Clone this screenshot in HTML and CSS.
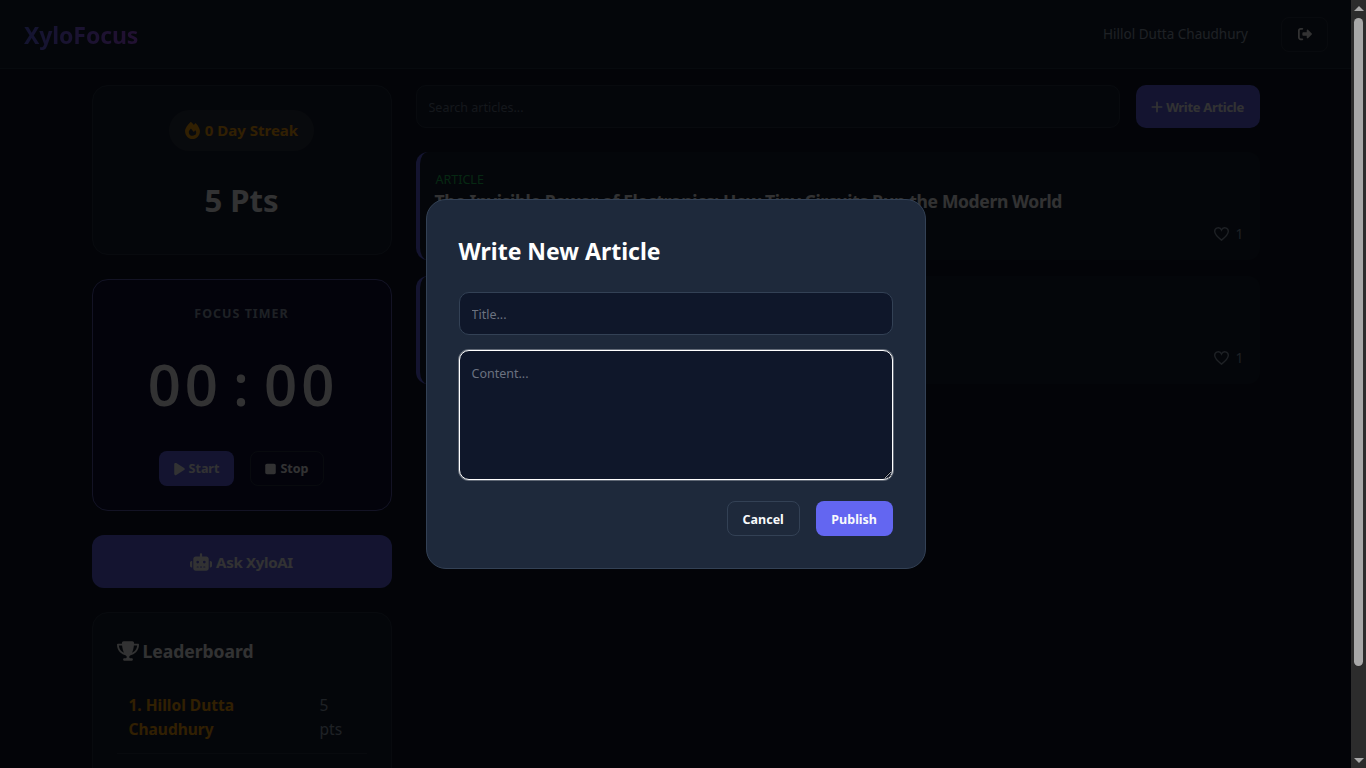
FILE: index.html
```html
<!DOCTYPE html>
<html lang="en">
<head>
    <meta charset="UTF-8">
    <meta name="viewport" content="width=device-width, initial-scale=1.0">
    <title>XyloFocus</title>
    <link rel="stylesheet" href="styles.css">
</head>
<body>
    <header class="navbar">
        <div class="logo">XyloFocus</div>
        <div class="user-box">
            <span class="user-name">Hillol Dutta Chaudhury</span>
            <button class="logout-btn" aria-label="Log out">
                <svg width="14" height="14" viewBox="0 0 512 512"><path fill="currentColor" d="M502.6 278.6c12.5-12.5 12.5-32.8 0-45.3l-128-128c-9.2-9.2-22.9-11.9-34.9-6.9S320 115.1 320 128v64H192c-17.7 0-32 14.3-32 32v64c0 17.7 14.3 32 32 32h128v64c0 12.9 7.8 24.6 19.8 29.6s25.7 2.2 34.9-6.9l128-128zM160 96c17.7 0 32-14.3 32-32s-14.3-32-32-32H96C43 32 0 75 0 128v256c0 53 43 96 96 96h64c17.7 0 32-14.3 32-32s-14.3-32-32-32H96c-17.7 0-32-14.3-32-32V128c0-17.7 14.3-32 32-32h64z"/></svg>
            </button>
        </div>
    </header>

    <div class="container">
        <aside class="sidebar">
            <section class="card stats-card">
                <div class="streak">
                    <svg width="15" height="17" viewBox="0 0 448 512"><path fill="currentColor" d="M159.3 5.4c7.8-7.3 19.9-7.2 27.7.1 27.6 25.9 53.5 53.8 77.7 84 11-14.4 23.5-30.1 37-42.9 7.9-7.4 20.1-7.4 28 .1 34.6 33 63.9 76.6 84.5 118 20.3 40.8 33.8 82.5 33.8 111.9C448 404.2 348.2 512 224 512 98.4 512 0 404.1 0 276.5c0-38.4 17.8-85.3 45.4-131.7C73.3 97.7 112.7 48.6 159.3 5.4zM225.7 416c25.3 0 47.7-7 68.8-21 42.1-29.4 53.4-88.2 28.1-134.4-4.5-9-16-9.6-22.5-2l-25.2 29.3c-6.6 7.6-18.5 7.4-24.7-.5-16.5-21-46-58.5-62.8-79.8-6.3-8-18.3-8.1-24.7-.1-33.8 42.5-50.8 69.3-50.8 99.4C112 375.4 162.6 416 225.7 416z"/></svg>
                    <span class="streak-text">0 Day Streak</span>
                </div>
                <div class="points">5 Pts</div>
            </section>

            <section class="card timer-card">
                <div class="timer-label">FOCUS TIMER</div>
                <div class="timer-digits">00 : 00</div>
                <div class="timer-actions">
                    <button class="btn btn-primary">
                        <svg width="11" height="14" viewBox="0 0 384 512"><path fill="currentColor" d="M73 39c-15-9-33-9-48.500-1S0 63 0 80v352c0 17 9 33 24.500 42s34 8 48.500-1l288-176c14-9 23-24 23-41s-9-32-23-41L73 39z"/></svg>
                        Start
                    </button>
                    <button class="btn btn-ghost">
                        <svg width="11" height="14" viewBox="0 0 384 512"><path fill="currentColor" d="M0 128c0-35 29-64 64-64h256c35 0 64 29 64 64v256c0 35-29 64-64 64H64c-35 0-64-29-64-64V128z"/></svg>
                        Stop
                    </button>
                </div>
            </section>

            <button class="ask-btn">
                <svg width="22" height="18" viewBox="0 0 640 512"><path fill="currentColor" d="M320 0c17.700 0 32 14.300 32 32v64h120c39.800 0 72 32.200 72 72v272c0 39.800-32.200 72-72 72H168c-39.800 0-72-32.200-72-72V168c0-39.800 32.200-72 72-72h120V32c0-17.700 14.300-32 32-32zM208 384c-8.800 0-16 7.200-16 16s7.200 16 16 16h32c8.800 0 16-7.200 16-16s-7.200-16-16-16h-32zm96 0c-8.800 0-16 7.200-16 16s7.200 16 16 16h32c8.800 0 16-7.200 16-16s-7.200-16-16-16h-32zm96 0c-8.800 0-16 7.200-16 16s7.200 16 16 16h32c8.800 0 16-7.200 16-16s-7.200-16-16-16h-32zM264 256a40 40 0 1 0-80 0 40 40 0 1 0 80 0zm152 40a40 40 0 1 0 0-80 40 40 0 1 0 0 80zM48 224h16v192H48c-26.500 0-48-21.500-48-48v-96c0-26.500 21.500-48 48-48zm544 0c26.500 0 48 21.500 48 48v96c0 26.500-21.500 48-48 48h-16V224h16z"/></svg>
                Ask XyloAI
            </button>

            <section class="card board-card">
                <h3 class="board-title">
                    <svg width="22" height="20" viewBox="0 0 576 512"><path fill="currentColor" d="M400 0H176c-26.500 0-48.100 21.800-47.100 48.200.2 5.300.4 10.600.7 15.800H24C10.700 64 0 74.700 0 88c0 92.600 33.500 157 78.500 200.700 44.300 43.100 98.300 64.800 138.100 75.800 23.400 6.500 39.400 26 39.400 45.600 0 20.900-17 37.900-37.900 37.900H192c-17.700 0-32 14.300-32 32s14.300 32 32 32h192c17.700 0 32-14.300 32-32s-14.300-32-32-32h-26.100c-20.900 0-37.900-17-37.900-37.900 0-19.600 15.900-39.200 39.400-45.600 39.900-11 93.900-32.700 138.200-75.800C542.500 245 576 180.600 576 88c0-13.300-10.700-24-24-24H446.400c.3-5.200.5-10.400.7-15.800C448.100 21.800 426.500 0 400 0zM48.900 112h84.400c9.100 90.100 29.200 150.300 51.900 190.600-24.900-11-50.800-26.500-73.200-48.300-32-31.100-58-76-63-142.300zm415.200 142.300c-22.400 21.800-48.300 37.300-73.200 48.300 22.700-40.300 42.800-100.500 51.900-190.600h84.400c-5.100 66.300-31.100 111.200-63 142.300z"/></svg>
                    Leaderboard
                </h3>
                <div class="board-row">
                    <span class="board-name">1. Hillol Dutta Chaudhury</span>
                    <span class="board-pts">5 pts</span>
                </div>
            </section>
        </aside>

        <main class="feed">
            <div class="feed-top">
                <input class="search" type="text" placeholder="Search articles...">
                <button class="write-btn">
                    <svg width="12" height="14" viewBox="0 0 448 512"><path fill="currentColor" d="M256 80c0-17.700-14.300-32-32-32s-32 14.300-32 32v144H48c-17.700 0-32 14.300-32 32s14.300 32 32 32h144v144c0 17.700 14.300 32 32 32s32-14.300 32-32V288h144c17.700 0 32-14.300 32-32s-14.300-32-32-32H256V80z"/></svg>
                    Write Article
                </button>
            </div>

            <article class="post">
                <div class="post-tag">ARTICLE</div>
                <h3 class="post-title">The Invisible Power of Electronics: How Tiny Circuits Run the Modern World</h3>
                <div class="post-foot">
                    <span class="likes">
                        <svg width="15" height="14" viewBox="1 2 22 20"><path fill="none" stroke="currentColor" stroke-width="2" d="M12 21C5 15.500 2 12 2 8a5.200 5.200 0 0 1 10-2 5.200 5.200 0 0 1 10 2c0 4-3 7.500-10 13z"/></svg>
                        1
                    </span>
                </div>
            </article>

            <article class="post">
                <div class="post-foot post-foot-low">
                    <span class="likes">
                        <svg width="15" height="14" viewBox="1 2 22 20"><path fill="none" stroke="currentColor" stroke-width="2" d="M12 21C5 15.500 2 12 2 8a5.200 5.200 0 0 1 10-2 5.200 5.200 0 0 1 10 2c0 4-3 7.500-10 13z"/></svg>
                        1
                    </span>
                </div>
            </article>
        </main>
    </div>

    <div class="overlay">
        <div class="modal">
            <h2 class="modal-title">Write New Article</h2>
            <input class="field" type="text" placeholder="Title...">
            <textarea class="field field-area" placeholder="Content..."></textarea>
            <div class="modal-actions">
                <button class="modal-btn modal-cancel">Cancel</button>
                <button class="modal-btn modal-publish">Publish</button>
            </div>
        </div>
    </div>

    <div class="scrollbar">
        <span class="arrow-up"></span>
        <span class="thumb"></span>
        <span class="arrow-down"></span>
    </div>
</body>
</html>
```

FILE: styles.css
```css
* {
    margin: 0;
    padding: 0;
    box-sizing: border-box;
    font-family: 'Noto Sans', 'Open Sans', sans-serif;
}

body {
    background-color: #0f172a;
    color: #f8fafc;
    height: 100vh;
    padding-right: 15px;
    overflow: hidden;
}

button {
    cursor: pointer;
    border: none;
}

svg {
    display: inline-block;
    flex-shrink: 0;
}

.navbar {
    height: 69px;
    padding: 0 23px 0 24px;
    display: flex;
    align-items: center;
    justify-content: space-between;
    background-color: #182032;
    border-bottom: 1px solid #263249;
}

.logo {
    padding-top: 2px;
    font-size: 23px;
    font-weight: 700;
    letter-spacing: -0.1px;
    background: linear-gradient(90deg, #6366f1, #a855f7);
    background-clip: text;
    -webkit-background-clip: text;
    color: transparent;
}

.user-box {
    display: flex;
    align-items: center;
    gap: 33px;
}

.user-name {
    font-size: 13.5px;
    color: #94a3b8;
}

.logout-btn {
    width: 47px;
    height: 35px;
    display: flex;
    align-items: center;
    justify-content: center;
    color: #f8fafc;
    background: transparent;
    border: 1px solid #2a3548;
    border-radius: 8px;
}

.container {
    max-width: 1200px;
    margin: 0 auto;
    padding: 16px;
    display: grid;
    grid-template-columns: 300px 1fr;
    gap: 24px;
    align-items: start;
}

.sidebar {
    display: flex;
    flex-direction: column;
    gap: 24px;
}

.card {
    background-color: #182032;
    border: 1px solid #2a3548;
    border-radius: 16px;
}

.stats-card {
    height: 170px;
    padding-top: 24px;
    display: flex;
    flex-direction: column;
    align-items: center;
}

.streak {
    height: 41px;
    padding: 0 16px;
    display: flex;
    align-items: center;
    gap: 5px;
    font-size: 15px;
    font-weight: 700;
    color: #f59e0b;
    background-color: #2c3342;
    border-radius: 21px;
}

.streak-text {
    padding-bottom: 2px;
}

.points {
    margin-top: 25px;
    font-size: 31px;
    font-weight: 700;
    line-height: 48px;
}

.timer-card {
    height: 232px;
    padding-top: 24px;
    display: flex;
    flex-direction: column;
    align-items: center;
    background-color: #0f0f3a;
    border-color: #5f60b5;
}

.timer-label {
    font-size: 12.5px;
    font-weight: 700;
    line-height: 20px;
    letter-spacing: 1px;
    color: #94a3b8;
}

.timer-digits {
    margin-top: 18px;
    padding-left: 3px;
    font-family: 'Open Sans', sans-serif;
    font-size: 58px;
    font-weight: 600;
    line-height: 84px;
    letter-spacing: 4px;
    word-spacing: -8px;
}

.timer-actions {
    margin-top: 25px;
    display: flex;
    gap: 16px;
}

.btn {
    height: 35px;
    padding: 0 14.5px;
    display: flex;
    align-items: center;
    gap: 4px;
    font-size: 12.5px;
    font-weight: 700;
    color: #f8fafc;
    border-radius: 8px;
}

.btn-primary {
    background-color: #6366f1;
}

.btn-ghost {
    background-color: transparent;
    border: 1px solid #2a3548;
}

.ask-btn {
    height: 53px;
    display: flex;
    align-items: center;
    justify-content: center;
    gap: 4px;
    font-size: 15px;
    font-weight: 700;
    letter-spacing: -0.3px;
    color: #f8fafc;
    background-color: #6366f1;
    border-radius: 12px;
}

.board-card {
    padding: 24px;
    height: 300px;
}

.board-title {
    display: flex;
    align-items: center;
    gap: 4px;
    font-size: 17.5px;
    font-weight: 700;
    line-height: 28px;
}

.board-row {
    margin-top: 28px;
    padding: 0 12px 12px;
    display: flex;
    justify-content: space-between;
    gap: 16px;
    font-size: 15.5px;
    line-height: 24px;
    border-bottom: 1px solid #2a3548;
}

.board-name {
    width: 160px;
    font-weight: 700;
    color: #f59e0b;
}

.board-pts {
    width: 35px;
    color: #94a3b8;
}

.feed-top {
    display: flex;
    gap: 16px;
    margin-bottom: 24px;
}

.search {
    flex: 1;
    height: 43px;
    padding: 2px 12px 0;
    font-size: 12.5px;
    background-color: #182032;
    border: 1px solid #2a3548;
    border-radius: 10px;
}

.search::placeholder {
    color: #64748b;
}

.write-btn {
    width: 124px;
    height: 43px;
    display: flex;
    align-items: center;
    justify-content: center;
    gap: 3px;
    font-size: 13px;
    font-weight: 700;
    letter-spacing: -0.3px;
    color: #f8fafc;
    background-color: #6366f1;
    border-radius: 10px;
}

.post {
    height: 108px;
    padding: 17px 16px 0 15px;
    margin-bottom: 16px;
    background-color: #182032;
    border-left: 4px solid #6366f1;
    border-radius: 12px;
}

.post-tag {
    padding: 2px 0 0 1px;
    font-size: 12.5px;
    line-height: 18px;
    color: #22c55e;
}

.post-title {
    font-size: 17.5px;
    font-weight: 700;
    line-height: 24px;
    letter-spacing: -0.35px;
}

.post-foot {
    display: flex;
    justify-content: flex-end;
    margin-top: 11px;
}

.post-foot-low {
    margin-top: 55px;
}

.likes {
    display: flex;
    align-items: center;
    gap: 6px;
    font-size: 14px;
    color: #94a3b8;
}

.overlay {
    position: fixed;
    top: 0;
    left: 0;
    right: 15px;
    bottom: 0;
    display: flex;
    align-items: center;
    justify-content: center;
    background-color: rgba(0, 0, 0, 0.8);
}

.modal {
    width: 500px;
    height: 370px;
    padding: 32px;
    background-color: #1e293b;
    border: 1px solid #334155;
    border-radius: 20px;
}

.modal-title {
    font-size: 23px;
    font-weight: 700;
    line-height: 38px;
    color: #fff;
    margin-bottom: 22px;
}

.field {
    display: block;
    width: 100%;
    height: 43px;
    padding: 2px 12px 0;
    font-size: 12.5px;
    color: #f8fafc;
    background-color: #0f172a;
    border: 1px solid #334155;
    border-radius: 10px;
}

.field::placeholder {
    color: #6b7280;
}

.field-area {
    height: 130px;
    margin-top: 15px;
    padding: 14px 12px;
    border-color: #fff;
    box-shadow: 0 0 0 1px rgba(255, 255, 255, 0.3);
    outline: none;
}

.modal-actions {
    margin-top: 21px;
    display: flex;
    justify-content: flex-end;
    gap: 16px;
}

.modal-btn {
    height: 35px;
    padding: 1px 15.5px 0;
    font-size: 12.5px;
    font-weight: 700;
    color: #f8fafc;
    border-radius: 8px;
}

.modal-cancel {
    padding: 1px 15px 0;
    background-color: transparent;
    border: 1px solid #334155;
}

.modal-publish {
    background-color: #6366f1;
}

/* page scrollbar, headless browser hides the real one */
.scrollbar {
    position: fixed;
    top: 0;
    right: 0;
    bottom: 0;
    width: 15px;
    display: flex;
    flex-direction: column;
    align-items: center;
    background-color: #2c2c2c;
}

.thumb {
    width: 9px;
    height: 648px;
    margin-top: 7px;
    background-color: #a8a8a8;
    border-radius: 5px;
}

.arrow-up,
.arrow-down {
    width: 0;
    height: 0;
    border-left: 5px solid transparent;
    border-right: 5px solid transparent;
}

.arrow-up {
    margin-top: 6px;
    border-bottom: 5px solid #a8a8a8;
}

.arrow-down {
    margin-top: 92px;
    border-top: 5px solid #a8a8a8;
}
```
